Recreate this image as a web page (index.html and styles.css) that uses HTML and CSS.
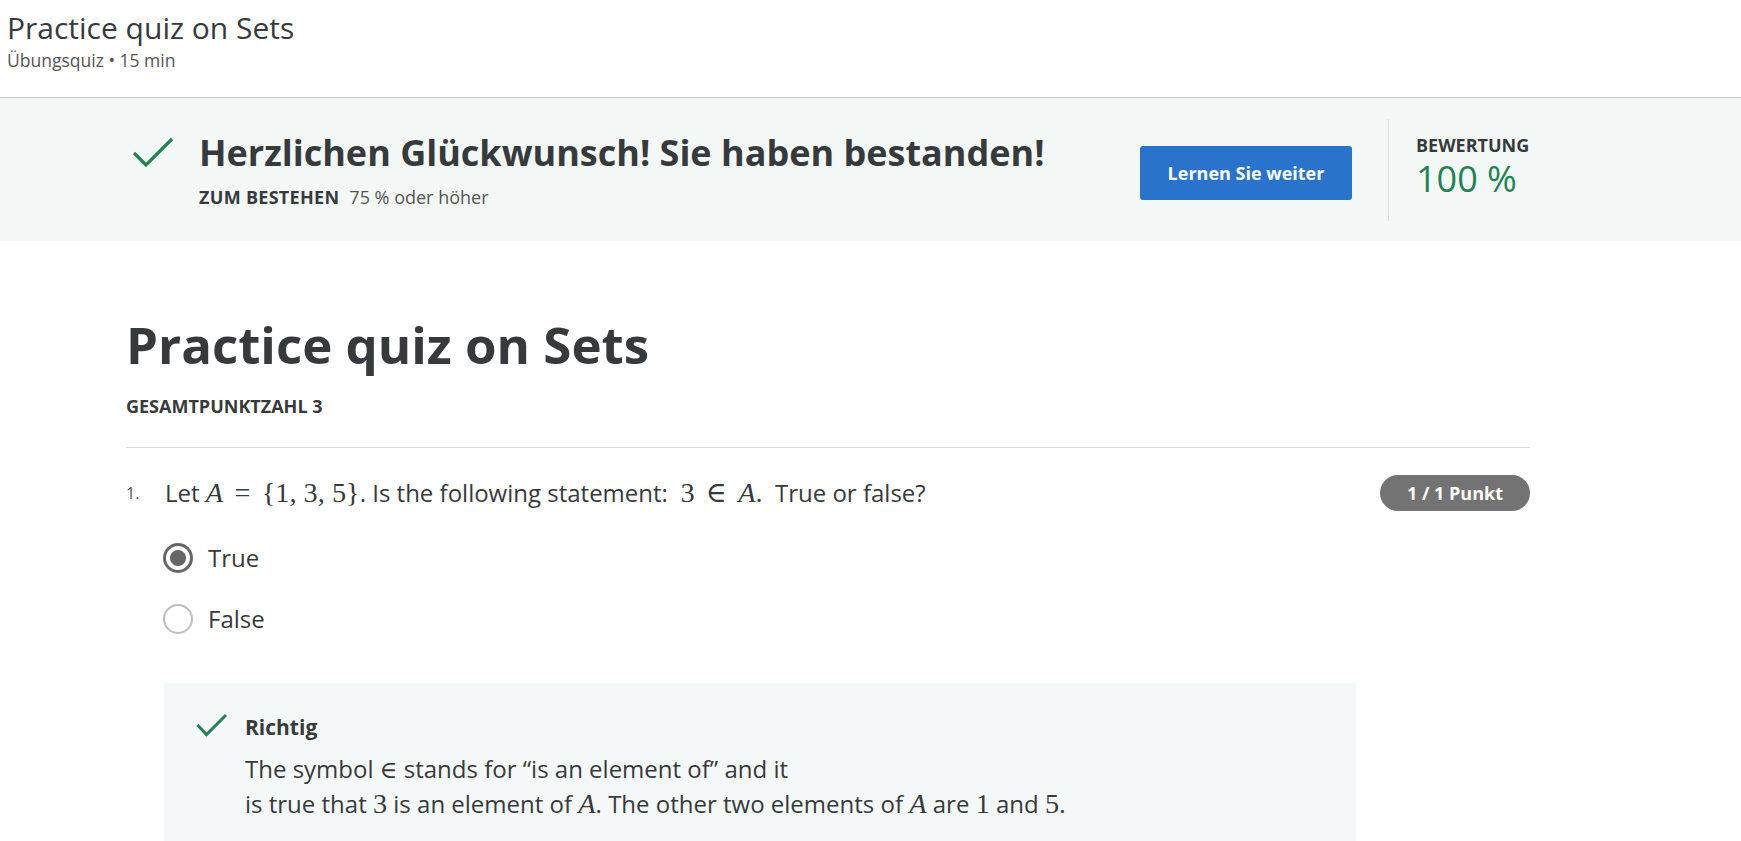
FILE: index.html
```html
<!DOCTYPE html>
<html lang="de">
<head>
<meta charset="utf-8">
<title>Practice quiz on Sets</title>
<link rel="stylesheet" href="styles.css">
</head>
<body>
<header class="top">
  <h1 class="top-title">Practice quiz on Sets</h1>
  <div class="top-sub">Übungsquiz • 15 min</div>
</header>

<section class="banner">
  <div class="banner-inner">
    <div class="banner-main">
      <svg class="banner-check" viewBox="0 0 42 32" width="42" height="32" aria-hidden="true">
        <path d="M2 17 L14 29 L40 3" fill="none" stroke="#1f8354" stroke-width="3.2"/>
      </svg>
      <div class="banner-text">
        <h2 class="banner-heading">Herzlichen Glückwunsch! Sie haben bestanden!</h2>
        <div class="banner-pass"><span class="label">ZUM BESTEHEN</span><span class="pass-val">75 % oder höher</span></div>
      </div>
    </div>
    <button class="btn-primary">Lernen Sie weiter</button>
    <div class="grade">
      <div class="label">BEWERTUNG</div>
      <div class="grade-val">100 %</div>
    </div>
  </div>
</section>

<main class="content">
  <h1 class="quiz-title">Practice quiz on Sets</h1>
  <div class="label total">GESAMTPUNKTZAHL 3</div>
  <hr class="rule">

  <div class="question">
    <div class="q-head">
      <span class="q-num">1.</span>
      <p class="q-text">Let <span class="m"><i>A</i> <span class="rel">=</span> {1, 3, 5}</span>. Is the following statement:&nbsp; <span class="m">3 <span class="rel">∈</span> <i>A</i>.</span>&nbsp; True or false?</p>
      <span class="badge">1 / 1 Punkt</span>
    </div>

    <div class="options">
      <label class="opt"><span class="radio checked"></span><span class="opt-label">True</span></label>
      <label class="opt"><span class="radio"></span><span class="opt-label">False</span></label>
    </div>

    <div class="feedback">
      <svg class="fb-check" viewBox="0 0 32 24" width="32" height="24" aria-hidden="true">
        <path d="M1.5 12 L10.5 21.5 L30 2" fill="none" stroke="#1f8354" stroke-width="3"/>
      </svg>
      <div class="fb-body">
        <div class="fb-title">Richtig</div>
        <p class="fb-text">The symbol <span class="m sm">∈</span> stands for “is an element of” and it<br>is true that <span class="m">3</span> is an element of <span class="m"><i>A</i></span>. The other two elements of <span class="m"><i>A</i></span> are <span class="m">1</span> and <span class="m">5</span>.</p>
      </div>
    </div>
  </div>
</main>
</body>
</html>
```

FILE: styles.css
```css
* { box-sizing: border-box; }

html, body {
  margin: 0;
  padding: 0;
  background: #ffffff;
  font-family: "Open Sans", "Noto Sans", sans-serif;
  color: #373a3c;
}

body { overflow: hidden; height: 841px; }

.top {
  padding: 8px 7px 0 7px;
  height: 98px;
  border-bottom: 1px solid #c9c9c9;
}

.top-title {
  margin: 0;
  font-size: 30px;
  font-weight: 400;
  line-height: 40px;
  color: #373a3c;
}

.top-sub {
  font-size: 17.5px;
  line-height: 24px;
  color: #555;
}

.banner {
  background: #f3f8f6;
  height: 143px;
}

.banner-inner {
  display: flex;
  align-items: center;
  height: 100%;
  padding-left: 132px;
  width: 1530px;
}

.banner-main {
  display: flex;
  align-items: flex-start;
  flex: 1;
}

.banner-check {
  margin-top: 5px;
  margin-right: 25px;
  flex: none;
}

.banner-heading {
  margin: 0;
  font-size: 36px;
  font-weight: 700;
  line-height: 44px;
  color: #373a3c;
}

.banner-pass {
  margin-top: 10px;
  font-size: 18px;
  line-height: 24px;
}

.label {
  font-size: 18px;
  font-weight: 700;
  color: #373a3c;
}

.banner-pass .label { margin-right: 10px; letter-spacing: 0.3px; }

.pass-val { color: #555; }

.btn-primary {
  flex: none;
  width: 212px;
  height: 54px;
  margin-top: 6px;
  margin-right: 36px;
  border: none;
  border-radius: 3px;
  background: #2a73cc;
  color: #fff;
  font-family: inherit;
  font-size: 18px;
  font-weight: 700;
}

.grade {
  flex: none;
  align-self: stretch;
  margin: 21px 0 20px;
  border-left: 1px solid #dcdfde;
  padding: 14px 0 0 27px;
  width: 142px;
}

.grade-val {
  font-size: 36px;
  line-height: 44px;
  color: #1f8354;
}

.content {
  padding: 71px 0 0 126px;
  width: 1530px;
}

.quiz-title {
  margin: 0;
  font-size: 51px;
  font-weight: 700;
  line-height: 64px;
  color: #373a3c;
}

.total {
  margin-top: 18px;
  line-height: 24px;
}

.rule {
  margin: 29px 0 0;
  border: 0;
  border-top: 1px solid #dadada;
}

.question { padding-top: 30px; }

.q-head {
  display: flex;
  align-items: flex-start;
}

.q-num {
  width: 39px;
  flex: none;
  font-size: 16px;
  line-height: 30px;
  color: #555;
}

.q-text {
  flex: 1;
  margin: 0;
  font-size: 24px;
  line-height: 30px;
}

.m {
  font-family: "Liberation Serif", "DejaVu Serif", serif;
  font-size: 1.18em;
  line-height: 1;
}
.m i { font-style: italic; }
.m .rel { padding: 0 0.15em; }
.m.sm { font-size: 1em; }

.badge {
  flex: none;
  width: 150px;
  height: 36px;
  margin-top: -3px;
  border-radius: 18px;
  background: #737373;
  color: #fff;
  font-size: 18px;
  font-weight: 700;
  line-height: 36px;
  text-align: center;
}

.options {
  display: flex;
  flex-direction: column;
  gap: 31px;
  padding: 32px 0 0 37px;
}

.opt {
  display: flex;
  align-items: center;
  gap: 15px;
}

.radio {
  width: 30px;
  height: 30px;
  border-radius: 50%;
  border: 2px solid #bdbdbd;
  background: #fff;
  flex: none;
}

.radio.checked {
  border: 3px solid #666;
  background: radial-gradient(circle, #666 0 7.5px, #fff 8.5px);
}

.opt-label {
  font-size: 24px;
  line-height: 30px;
}

.feedback {
  display: flex;
  align-items: flex-start;
  margin: 49px 0 0 38px;
  width: 1192px;
  padding: 30px 32px 70px 32px;
  background: #f5f8f8;
}

.fb-check {
  flex: none;
  margin-right: 17px;
}

.fb-title {
  font-size: 21px;
  font-weight: 700;
  line-height: 28px;
}

.fb-text {
  margin: 10px 0 0;
  font-size: 24px;
  line-height: 35px;
  color: #373a3c;
}
```
